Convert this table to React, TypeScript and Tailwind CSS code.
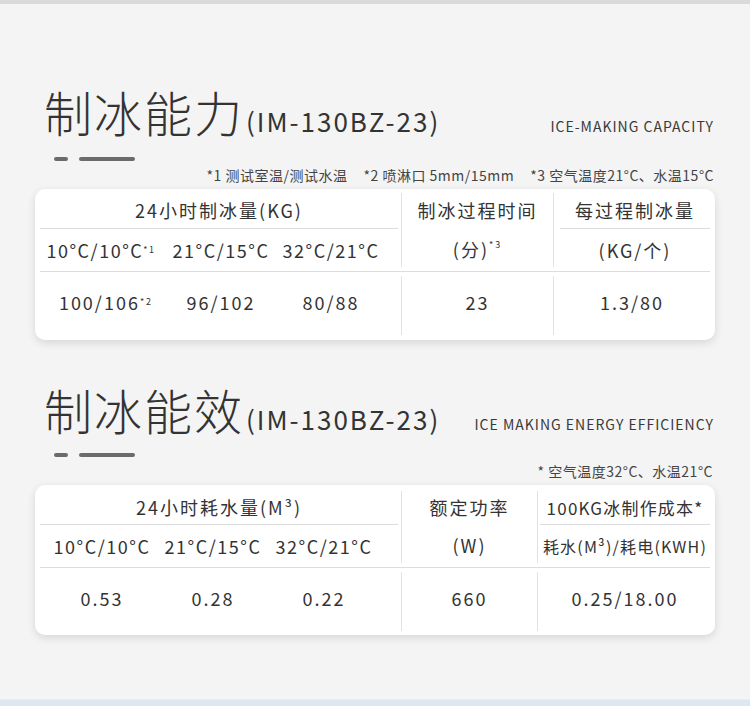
const VLine = ({ className = "" }: { className?: string }) => (
  <div className={`w-px bg-[#e2e2e2] ${className}`} />
);

const Dashes = () => (
  <div className="flex items-center gap-[11px] pl-[54px]">
    <span className="h-[4px] w-[14px] rounded-full bg-[#6b6b6b]" />
    <span className="h-[4px] w-[56px] rounded-full bg-[#6b6b6b]" />
  </div>
);

const TitleRow = ({ cn, en }: { cn: string; en: string }) => (
  <div className="flex items-baseline pl-[44px] pr-[36px] text-[#333]">
    <span className="text-[48px] leading-none font-light tracking-[2px]">{cn}</span>
    <span className="ml-[2px] text-[26px] leading-none tracking-[2px]">(IM-130BZ-23)</span>
    <span className="ml-auto text-[14px] leading-none tracking-[1px] text-[#3a3a3a]">{en}</span>
  </div>
);

export default function App() {
  return (
    <div className="w-[750px] h-[706px] overflow-hidden bg-[#f4f4f4] flex flex-col font-['Noto_Sans_CJK_SC','Noto_Sans',sans-serif] text-[#333]">
      <div className="h-[4px] bg-[#dadada]" />

      {/* 制冰能力 */}
      <div className="mt-[83px]">
        <TitleRow cn="制冰能力" en="ICE-MAKING CAPACITY" />
      </div>
      <div className="mt-[22px]">
        <Dashes />
      </div>
      <div className="mt-[6px] flex justify-end gap-[16px] pr-[36px] text-[14px] leading-[16px] tracking-[0.5px] text-[#444]">
        <span>*1 测试室温/测试水温</span>
        <span>*2 喷淋口 5mm/15mm</span>
        <span>*3 空气温度21°C、水温15°C</span>
      </div>

      <div className="mt-[6px] mx-[35px] h-[151px] rounded-[10px] bg-white shadow-[0_3px_8px_rgba(0,0,0,0.12)] px-[5px] pt-[4px] text-[18px] tracking-[2px]">
        <div className="flex h-[78px]">
          <div className="w-[358px] flex flex-col">
            <div className="h-[35px] flex items-center justify-center">24小时制冰量(KG)</div>
            <div className="h-px bg-[#dcdcdc]" />
            <div className="h-[42px] grid grid-cols-[122px_118px_102px] items-center text-center whitespace-nowrap tracking-[1.5px]">
              <span>10°C/10°C<sup className="text-[9px]">*1</sup></span>
              <span>21°C/15°C</span>
              <span>32°C/21°C</span>
            </div>
          </div>
          <VLine className="ml-[3px] mb-[4px]" />
          <div className="w-[151px] flex flex-col">
            <div className="h-[35px] flex items-center justify-center">制冰过程时间</div>
            <div className="h-[43px] flex items-center justify-center">(分)<sup className="text-[9px]">*3</sup></div>
          </div>
          <VLine className="mb-[4px]" />
          <div className="flex-1 pl-[6px] flex flex-col">
            <div className="h-[35px] flex items-center justify-center">每过程制冰量</div>
            <div className="h-px bg-[#dcdcdc]" />
            <div className="h-[42px] flex items-center justify-center">(KG/个)</div>
          </div>
        </div>
        <div className="h-px bg-[#dcdcdc]" />
        <div className="flex h-[63px]">
          <div className="w-[358px] pb-[3px] grid grid-cols-[122px_118px_102px] items-center text-center whitespace-nowrap">
            <span className="pl-[10px]">100/106<sup className="text-[9px]">*2</sup></span>
            <span>96/102</span>
            <span>80/88</span>
          </div>
          <VLine className="ml-[3px] mt-[4px]" />
          <div className="w-[151px] pb-[3px] flex items-center justify-center">23</div>
          <VLine className="mt-[4px]" />
          <div className="flex-1 pb-[3px] flex items-center justify-center">1.3/80</div>
        </div>
      </div>

      {/* 制冰能效 */}
      <div className="mt-[45px]">
        <TitleRow cn="制冰能效" en="ICE MAKING ENERGY EFFICIENCY" />
      </div>
      <div className="mt-[20px]">
        <Dashes />
      </div>
      <div className="mt-[6px] flex justify-end pr-[37px] text-[14px] leading-[16px] tracking-[0.5px] text-[#444]">
        <span>* 空气温度32°C、水温21°C</span>
      </div>

      <div className="mt-[6px] mx-[35px] h-[150px] rounded-[10px] bg-white shadow-[0_3px_8px_rgba(0,0,0,0.12)] px-[5px] pt-[6px] text-[18px] tracking-[2px]">
        <div className="flex h-[76px]">
          <div className="w-[358px] flex flex-col">
            <div className="h-[33px] flex items-center justify-center">24小时耗水量(M³)</div>
            <div className="h-px bg-[#dcdcdc]" />
            <div className="h-[42px] grid grid-cols-[124px_98px_124px] items-center text-center whitespace-nowrap tracking-[1.5px]">
              <span>10°C/10°C</span>
              <span>21°C/15°C</span>
              <span>32°C/21°C</span>
            </div>
          </div>
          <VLine className="ml-[3px] mb-[4px]" />
          <div className="w-[135px] flex flex-col">
            <div className="h-[33px] flex items-center justify-center">额定功率</div>
            <div className="h-[43px] flex items-center justify-center">(W)</div>
          </div>
          <VLine className="mb-[4px]" />
          <div className="flex-1 pl-[2px] flex flex-col whitespace-nowrap">
            <div className="h-[33px] flex items-center justify-center text-[17px] tracking-[1.2px]">100KG冰制作成本*</div>
            <div className="h-px bg-[#dcdcdc]" />
            <div className="h-[42px] flex items-center justify-center text-[16px] tracking-[1.2px]">耗水(M³)/耗电(KWH)</div>
          </div>
        </div>
        <div className="h-px bg-[#dcdcdc]" />
        <div className="flex h-[63px]">
          <div className="w-[358px] pb-[3px] grid grid-cols-[124px_98px_124px] items-center text-center whitespace-nowrap">
            <span>0.53</span>
            <span>0.28</span>
            <span>0.22</span>
          </div>
          <VLine className="ml-[3px] mt-[4px]" />
          <div className="w-[135px] pb-[3px] flex items-center justify-center">660</div>
          <VLine className="mt-[4px]" />
          <div className="flex-1 pl-[2px] pb-[3px] flex items-center justify-center">0.25/18.00</div>
        </div>
      </div>

      <div className="mt-auto h-[7px] bg-[#dde7ef] border-t border-[#e9eef2]" />
    </div>
  );
}
